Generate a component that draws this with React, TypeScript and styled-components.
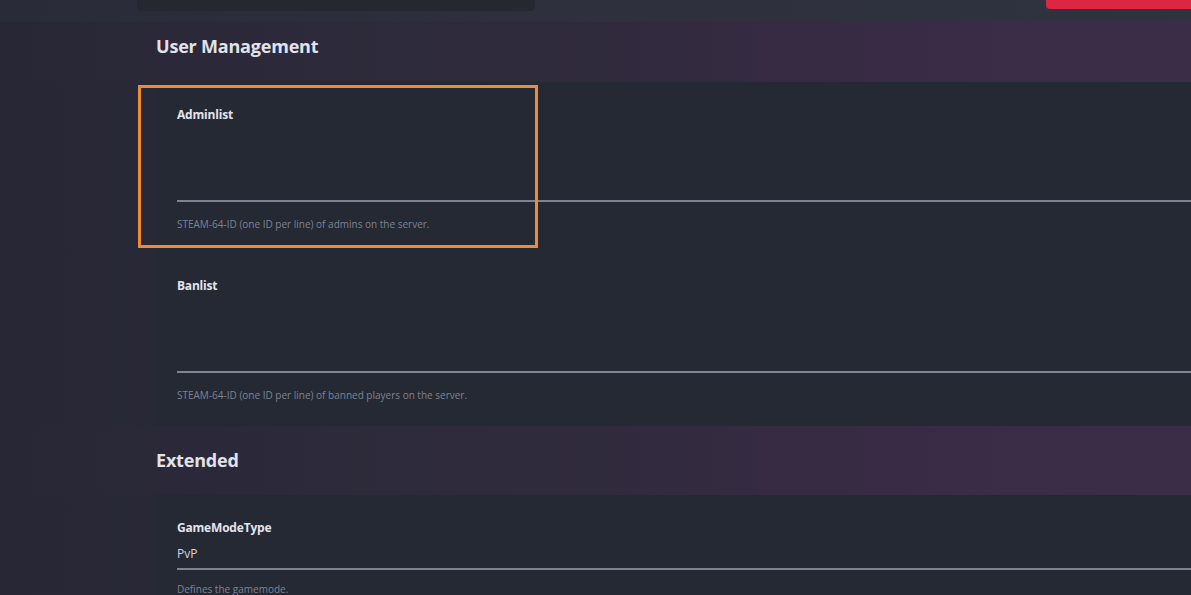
import React from 'react';
import styled, { createGlobalStyle } from 'styled-components';

type Field = {
    id: string;
    label: string;
    value?: string;
    help: string;
    multiline?: boolean;
};

type Section = {
    title: string;
    fields: Field[];
};

const sections: Section[] = [
    {
        title: "User Management",
        fields: [
            { id: "admins", label: "Adminlist", help: "STEAM-64-ID (one ID per line) of admins on the server.", multiline: true },
            { id: "bans", label: "Banlist", help: "STEAM-64-ID (one ID per line) of banned players on the server.", multiline: true },
        ],
    },
    {
        title: "Extended",
        fields: [
            { id: "mode", label: "GameModeType", value: "PvP", help: "Defines the gamemode." },
        ],
    },
];

const GlobalStyle = createGlobalStyle`
    html, body {
        margin: 0;
        padding: 0;
        background: #282936;
        overflow: hidden;
    }
    * { box-sizing: border-box; }
`;

const Page = styled.div`
    position: relative;
    width: 1191px;
    height: 595px;
    overflow: hidden;
    font-family: "Open Sans", "Liberation Sans", sans-serif;
    background: linear-gradient(90deg, #272735 0%, #2a2b39 40%, #2b2c3a 100%);
`;

const TopBar = styled.div`
    display: flex;
    justify-content: space-between;
    align-items: flex-start;
    height: 22px;
    padding-left: 137px;
    background: linear-gradient(90deg, #2a2b39 0%, #2e303d 50%, #2f323f 100%);
`;

const TopCard = styled.div`
    width: 398px;
    height: 11px;
    background: #252731;
    border-radius: 0 0 4px 4px;
`;

const DangerButton = styled.div`
    width: 150px;
    height: 9px;
    margin-right: -5px;
    background: #dc2743;
    border-radius: 0 0 4px 4px;
`;

const SectionHead = styled.div<{ $top: number; $bottom: number }>`
    padding: ${p => p.$top}px 0 ${p => p.$bottom}px 156px;
    background: linear-gradient(90deg, rgba(40,40,54,0) 0%, #2f2a3c 45%, #3a2b46 80%, #3b2c48 100%);
`;

const SectionTitle = styled.h2`
    margin: 0;
    font-size: 18px;
    line-height: 24px;
    font-weight: 700;
    color: #e2e2ea;
    letter-spacing: -0.2px;
`;

const Card = styled.div`
    margin-left: 155px;
    width: 1100px;
    padding: 26px 0 24px 22px;
    background: #242934;
    display: flex;
    flex-direction: column;
    gap: 48px;
`;

const FieldBlock = styled.div`
    display: flex;
    flex-direction: column;
`;

const Label = styled.label`
    font-size: 12px;
    line-height: 14px;
    font-weight: 700;
    color: #e4e4ec;
    letter-spacing: -0.2px;
`;

const Input = styled.div<{ $multi?: boolean }>`
    height: ${p => (p.$multi ? 78 : 33)}px;
    margin-top: 2px;
    border-bottom: 2px solid #7d8493;
    font-size: 12px;
    line-height: 14px;
    color: #d4d4dc;
    padding-top: ${p => (p.$multi ? 0 : 10)}px;
`;

const Help = styled.div<{ $multi?: boolean }>`
    margin-top: ${p => (p.$multi ? 15 : 12)}px;
    font-size: 10px;
    line-height: 14px;
    color: #7d8393;
`;

const Highlight = styled.div`
    position: absolute;
    left: 138px;
    top: 85px;
    width: 400px;
    height: 163px;
    border: 3px solid #f28a33;
    pointer-events: none;
`;

const App: React.FC = () => {
    return (
        <Page>
            <GlobalStyle />
            <TopBar>
                <TopCard />
                <DangerButton />
            </TopBar>
            {sections.map((section, i) => (
                <div key={section.title}>
                    <SectionHead $top={i === 0 ? 12 : 22} $bottom={i === 0 ? 24 : 23}>
                        <SectionTitle>{section.title}</SectionTitle>
                    </SectionHead>
                    <Card>
                        {section.fields.map(field => (
                            <FieldBlock key={field.id}>
                                <Label>{field.label}</Label>
                                <Input $multi={field.multiline}>{field.value}</Input>
                                <Help $multi={field.multiline}>{field.help}</Help>
                            </FieldBlock>
                        ))}
                    </Card>
                </div>
            ))}
            <Highlight />
        </Page>
    );
};

export default App;
